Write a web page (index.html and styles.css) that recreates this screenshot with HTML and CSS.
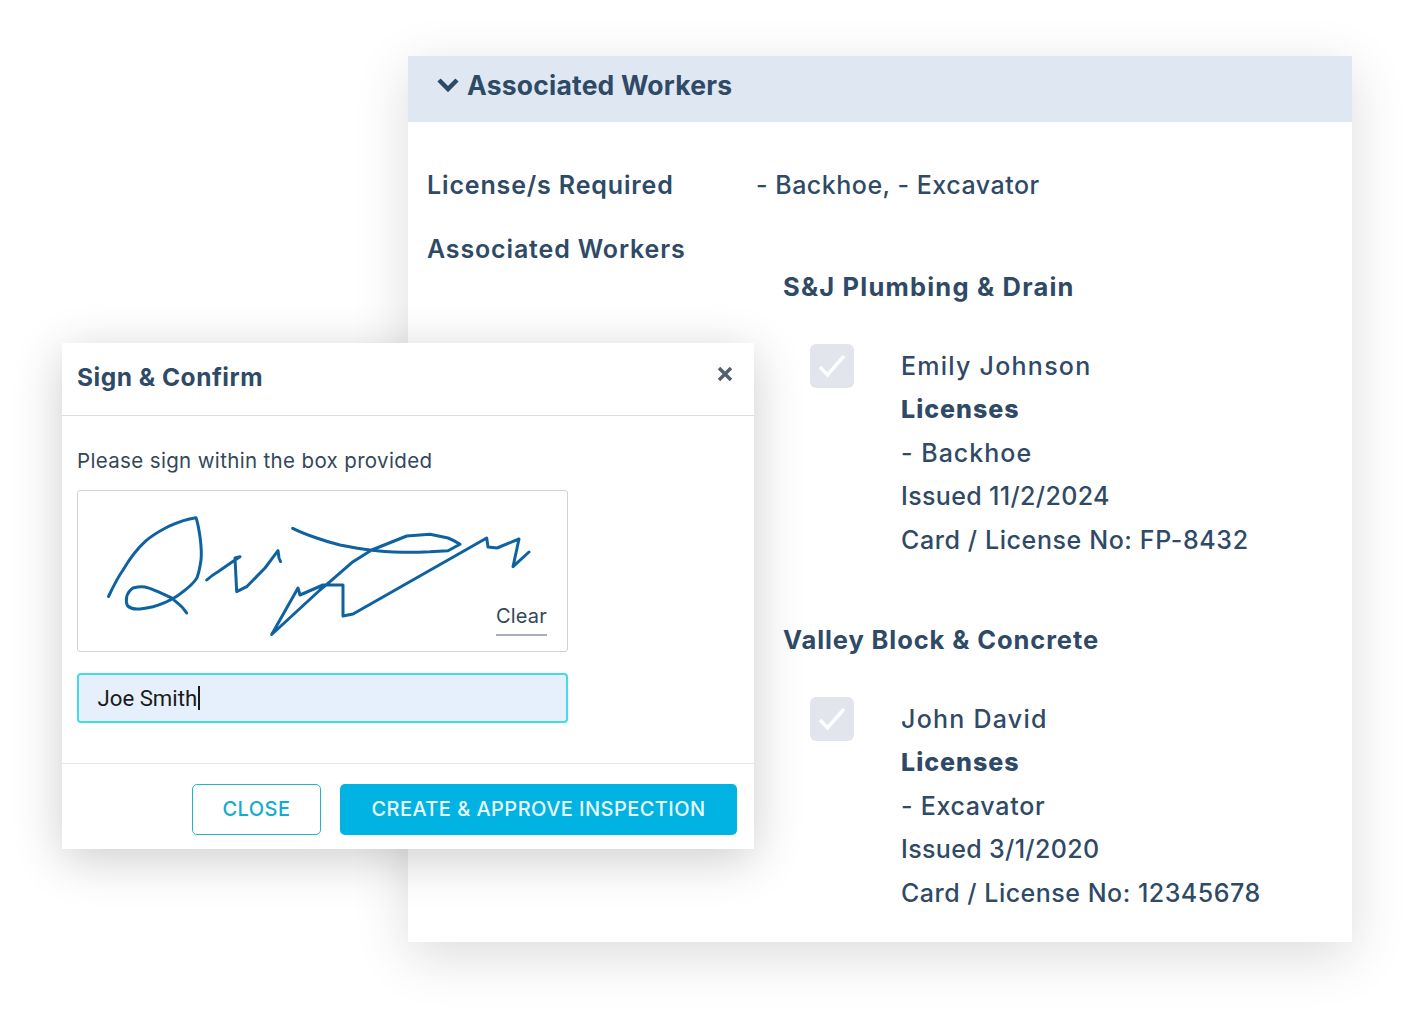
FILE: index.html
```html
<!DOCTYPE html>
<html lang="en">
<head>
<meta charset="utf-8">
<title>Sign &amp; Confirm</title>
<link rel="stylesheet" href="styles.css">
</head>
<body>
<main class="canvas">
  <section class="panel">
    <header class="panel-head">
      <svg class="chevron" viewBox="0 0 22 16" aria-hidden="true"><path d="M2 3l9 9 9-9"/></svg>
      <h2 class="panel-title">Associated Workers</h2>
    </header>
    <div class="panel-body">
      <div class="req-row">
        <span class="label">License/s Required</span>
        <span class="value">- Backhoe, - Excavator</span>
      </div>
      <div class="label label-workers">Associated Workers</div>
      <div class="company">
        <h3 class="company-name company-name-wide">S&amp;J Plumbing &amp; Drain</h3>
        <div class="worker">
          <span class="check"><svg viewBox="0 0 44 44" aria-hidden="true"><path d="M10 23l7.500 8L34 12"/></svg></span>
          <div class="details">
            <div class="person">Emily Johnson</div>
            <div class="licenses">Licenses</div>
            <div>- Backhoe</div>
            <div class="issued">Issued 11/2/2024</div>
            <div class="card">Card / License No: FP-8432</div>
          </div>
        </div>
      </div>
      <div class="company company-next">
        <h3 class="company-name">Valley Block &amp; Concrete</h3>
        <div class="worker">
          <span class="check"><svg viewBox="0 0 44 44" aria-hidden="true"><path d="M10 23l7.500 8L34 12"/></svg></span>
          <div class="details">
            <div class="person">John David</div>
            <div class="licenses">Licenses</div>
            <div class="skill-long">- Excavator</div>
            <div class="issued">Issued 3/1/2020</div>
            <div class="card card-num">Card / License No: 12345678</div>
          </div>
        </div>
      </div>
    </div>
  </section>

  <section class="modal">
    <header class="modal-head">
      <h2 class="modal-title">Sign &amp; Confirm</h2>
      <svg class="close-x" viewBox="0 0 18 18" aria-hidden="true"><path d="M3 3l12 12M15 3 3 15"/></svg>
    </header>
    <div class="modal-body">
      <p class="hint">Please sign within the box provided</p>
      <div class="sig-box">
        <svg class="sig" viewBox="77 490 491 161" aria-hidden="true">
          <path d="M108.500 596.500C113 587 118 577 123 570C129 560 137 549 145 541.700C152 535 160 531 168 526.700C178 522 187 519 196 517.700C198 523 199 530 200 536.700C201 545 202 552 201 560C200 567 199 573 196.700 578.300C193 584 188 588 183 591.700C179 595 175 598 170 600C165 603 159 605 153 606.700C147 608 142 609 136.700 609C133 609 130 608 127.700 606C126 603 126 600 126.700 596.700C128 592 130 590 133 588C137 587 141 586.500 145 587C150 588 154 590 158 591.700C163 594 167 596 171.700 598C175 601 178 603 181.700 606.700C184 609 185 611 186.700 613"/>
          <path d="M206.700 580C210 577 214 574 218 571.700L235 560L240 556.700L235 558L236.700 591.700L246.700 586.700L265 568L278 550.700L279 558L280.500 561.500"/>
          <path d="M292.700 528.300C300 532 308 535 316.700 538C325 541 332 543 340 545C350 547 360 549 370 550C381 551.500 392 552 403 552.300C412 552.500 421 552 430 551.700L448 550.700L460 544.300C456 541.500 452 539.500 448 538L430 534.300L406.700 536L371.700 550L353 561.700L330 581.700L320 590L271.700 634.500L298 588L300 595L323 585H343V616L353 614L486.700 538L488 547L497 548L519 539L513 566.700L529 552"/>
        </svg>
        <span class="clear">Clear</span>
      </div>
      <div class="name-input">Joe Smith<span class="caret"></span></div>
    </div>
    <footer class="modal-foot">
      <button class="btn btn-close" type="button">CLOSE</button>
      <button class="btn btn-create" type="button">CREATE &amp; APPROVE INSPECTION</button>
    </footer>
  </section>
</main>
</body>
</html>
```
FILE: styles.css
```css
* { box-sizing: border-box; }
html, body { margin: 0; padding: 0; background: #fff; }
body { font-family: Inter, "Open Sans", "Liberation Sans", sans-serif; color: #2f4a66; }
.canvas { position: relative; width: 1416px; height: 1014px; overflow: hidden; background: #fff; }
h2, h3, p { margin: 0; }

.panel { position: absolute; left: 408px; top: 56px; width: 944px; height: 886px; background: #fff; box-shadow: 0 14px 52px rgba(0, 0, 0, .14); }
.panel-head { display: flex; align-items: center; gap: 9px; height: 66px; padding: 0 0 8px 29px; background: #dfe8f2; }
.chevron { width: 22px; height: 16px; flex: none; fill: none; stroke: #2f4a66; stroke-width: 4.500; }
.panel-title { font-size: 26.500px; font-weight: 700; line-height: 1; letter-spacing: .2px; margin-left: -1px; }
.panel-body { padding: 43px 0 0 19px; font-size: 25px; font-weight: 500; }
.req-row { display: flex; line-height: 40px; }
.label { width: 329px; font-weight: 600; line-height: 40px; letter-spacing: .85px; }
.value { letter-spacing: .5px; }
.label-workers { margin-top: 24px; }
.company { margin-left: 356px; }
.company-name { font-size: 25.500px; font-weight: 700; line-height: 36px; letter-spacing: .9px; }
.company-name-wide { letter-spacing: 1.200px; }
.company-next { margin-top: 60px; }
.worker { display: flex; align-items: flex-start; margin-top: 39px; margin-left: 27px; }
.check { display: block; width: 44px; height: 44px; flex: none; border-radius: 6px; background: #e2e5ec; }
.check svg { display: block; width: 44px; height: 44px; fill: none; stroke: #fff; stroke-width: 3.500; }
.details { margin: .6px 0 0 47px; font-weight: 500; line-height: 43.500px; letter-spacing: 1px; }
.person { letter-spacing: 1.250px; }
.licenses { font-weight: 800; }
.skill-long { letter-spacing: .7px; }
.issued { letter-spacing: .35px; }
.card { letter-spacing: .6px; }
.card-num { letter-spacing: .5px; }

.modal { position: absolute; left: 62px; top: 343px; width: 692px; height: 506px; background: #fff; box-shadow: 0 10px 46px rgba(0, 0, 0, .2); display: flex; flex-direction: column; }
.modal-head { display: flex; align-items: center; justify-content: space-between; height: 73px; padding: 0 20px 4px 15px; border-bottom: 1px solid #dcdfe4; }
.modal-title { font-size: 24.500px; font-weight: 700; line-height: 1; letter-spacing: .5px; }
.close-x { width: 18px; height: 18px; fill: none; stroke: #55606e; stroke-width: 3.500; margin-top: -6px; }
.modal-body { flex: 1; padding: 32px 15px 0; border-bottom: 1px solid #e4e6ea; }
.hint { font-size: 20.500px; font-weight: 400; line-height: 26px; letter-spacing: .35px; color: #33475b; }
.sig-box { position: relative; width: 491px; height: 162px; margin-top: 16px; border: 1.500px solid #cfd2d6; border-radius: 3px; background: #fff; }
.sig { position: absolute; left: -1.500px; top: -1.500px; width: 491px; height: 161px; fill: none; stroke: #0f62a0; stroke-width: 3; stroke-linejoin: round; stroke-linecap: round; }
.clear { position: absolute; right: 20px; bottom: 15px; padding-bottom: 6px; border-bottom: 2px solid #a9aebd; font-size: 20px; line-height: 24px; letter-spacing: .2px; color: #33475b; }
.name-input { display: flex; align-items: center; width: 491px; height: 50px; margin-top: 21px; padding: 0 0 1px 18.500px; border: 2px solid #3fdcec; border-radius: 4px; background: #e6f0fc; font-size: 22.200px; color: #1a1a1a; font-family: Roboto, sans-serif; }
.caret { display: inline-block; width: 1.500px; height: 24px; margin-left: 1px; background: #1a1a1a; }
.modal-foot { display: flex; justify-content: flex-end; gap: 19px; height: 85px; padding: 20px 17px 14px 0; }
.btn { font-family: inherit; font-size: 20px; font-weight: 500; height: 51px; border-radius: 5px; padding: 0 0 2px; letter-spacing: .45px; }
.btn-close { width: 129px; background: #fff; color: #14abd3; border: 1.500px solid #22b4d2; }
.btn-create { width: 397px; background: #00b3e3; color: #eafaff; border: 0; }
```
